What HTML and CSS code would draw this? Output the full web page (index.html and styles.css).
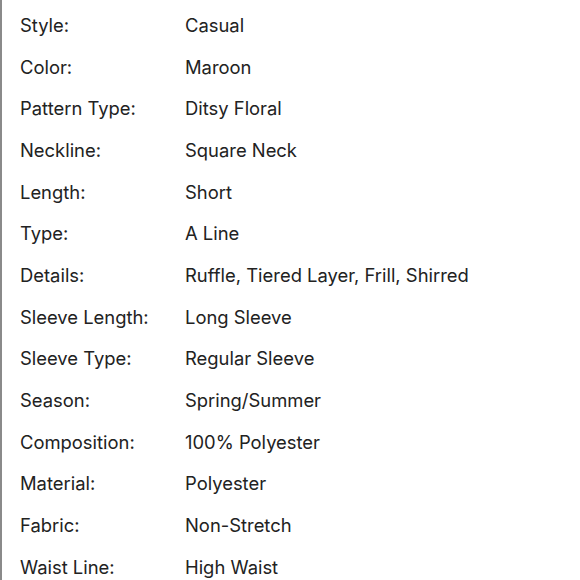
FILE: index.html
```html
<!DOCTYPE html>
<html>
<head>
<meta charset="utf-8">
<link rel="stylesheet" href="styles.css">
</head>
<body>
<div class="specs">
  <div class="row"><span class="label">Style:</span><span class="value">Casual</span></div>
  <div class="row"><span class="label">Color:</span><span class="value">Maroon</span></div>
  <div class="row"><span class="label">Pattern Type:</span><span class="value">Ditsy Floral</span></div>
  <div class="row"><span class="label">Neckline:</span><span class="value">Square Neck</span></div>
  <div class="row"><span class="label">Length:</span><span class="value">Short</span></div>
  <div class="row"><span class="label">Type:</span><span class="value">A Line</span></div>
  <div class="row"><span class="label">Details:</span><span class="value">Ruffle, Tiered Layer, Frill, Shirred</span></div>
  <div class="row"><span class="label">Sleeve Length:</span><span class="value">Long Sleeve</span></div>
  <div class="row"><span class="label">Sleeve Type:</span><span class="value">Regular Sleeve</span></div>
  <div class="row"><span class="label">Season:</span><span class="value">Spring/Summer</span></div>
  <div class="row"><span class="label">Composition:</span><span class="value">100% Polyester</span></div>
  <div class="row"><span class="label">Material:</span><span class="value">Polyester</span></div>
  <div class="row"><span class="label">Fabric:</span><span class="value">Non-Stretch</span></div>
  <div class="row"><span class="label">Waist Line:</span><span class="value">High Waist</span></div>
</div>
</body>
</html>
```
FILE: styles.css
```css
html, body {
  margin: 0;
  padding: 0;
  background: #fff;
}
body {
  font-family: Inter, "Noto Sans", sans-serif;
  color: #222;
  overflow: hidden;
}
.specs {
  border-left: 2px solid #8a8a8a;
  padding: 4px 0 0 18px;
  height: 580px;
  box-sizing: border-box;
}
.row {
  display: flex;
  height: 41.7px;
  align-items: center;
  font-size: 18.4px;
}
.label {
  width: 165px;
  flex: none;
}
```
